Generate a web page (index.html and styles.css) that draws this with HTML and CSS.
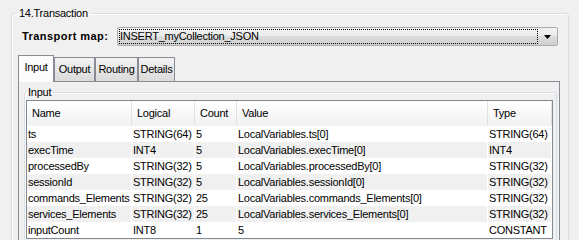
FILE: index.html
```html
<!DOCTYPE html>
<html>
<head>
<meta charset="utf-8">
<title>Transaction</title>
<link rel="stylesheet" href="styles.css">
</head>
<body>
<fieldset class="group">
  <legend>14.Transaction</legend>

  <div class="map-row">
    <label class="map-label">Transport map:</label>
    <div class="combo">
      <div class="combo-text">INSERT_myCollection_JSON</div>
      <div class="combo-btn">
        <svg width="7" height="4" viewBox="0 0 7 4"><polygon points="0,0 7,0 3.5,4" fill="#000"></polygon></svg>
      </div>
    </div>
  </div>

  <div class="tabs">
    <div class="tab tab-input selected">Input</div>
    <div class="tab tab-output">Output</div>
    <div class="tab tab-routing">Routing</div>
    <div class="tab tab-details">Details</div>
  </div>

  <div class="pane">
    <fieldset class="inner">
      <legend>Input</legend>
      <div class="table">
        <div class="row head">
          <div>Name</div><div>Logical</div><div>Count</div><div>Value</div><div>Type</div>
        </div>
        <div class="tbody">
          <div class="row"><div>ts</div><div>STRING(64)</div><div>5</div><div>LocalVariables.ts[0]</div><div>STRING(64)</div></div>
          <div class="row"><div>execTime</div><div>INT4</div><div>5</div><div>LocalVariables.execTime[0]</div><div>INT4</div></div>
          <div class="row"><div>processedBy</div><div>STRING(32)</div><div>5</div><div>LocalVariables.processedBy[0]</div><div>STRING(32)</div></div>
          <div class="row"><div>sessionId</div><div>STRING(32)</div><div>5</div><div>LocalVariables.sessionId[0]</div><div>STRING(32)</div></div>
          <div class="row"><div>commands_Elements</div><div>STRING(32)</div><div>25</div><div>LocalVariables.commands_Elements[0]</div><div>STRING(32)</div></div>
          <div class="row"><div>services_Elements</div><div>STRING(32)</div><div>25</div><div>LocalVariables.services_Elements[0]</div><div>STRING(32)</div></div>
          <div class="row"><div>inputCount</div><div>INT8</div><div>1</div><div>5</div><div>CONSTANT</div></div>
        </div>
      </div>
    </fieldset>
  </div>
</fieldset>
</body>
</html>
```

FILE: styles.css
```css
*{
  box-sizing:border-box;
}
html{
  overflow:hidden;
}
body{
  margin:0;
  padding-top:7px;
  height:240px;
  overflow:hidden;
  background:#f0f0f0;
  color:#000;
  font-family:"Liberation Sans",Arial,sans-serif;
  font-size:11px;
  line-height:13px;
  letter-spacing:-0.25px;
}
fieldset{
  min-width:0;
  border:1px solid #d5dfe5;
  border-radius:3px;
  box-shadow:inset 1px 1px 0 #fff;
}
legend{
  padding:0 2px;
  line-height:13px;
}
.group{
  margin:0 10px 0 11px;
  padding:0;
}
.group>legend{
  margin-left:5px;
}

/* transport map row */
.map-row{
  display:flex;
  align-items:center;
  margin:7px 10px 0 10px;
  height:19px;
}
.map-label{
  width:95px;
  font-weight:bold;
  letter-spacing:0.45px;
}
.combo{
  flex:1;
  display:flex;
  height:19px;
  padding:1px;
  border:1px solid #acacac;
  border-radius:2px;
  background:linear-gradient(#f2f2f2 0%,#ebebeb 50%,#dddddd 50%,#cfcfcf 100%);
}
.combo-text{
  flex:1;
  border:1px dotted #000;
  line-height:13px;
}
.combo-btn{
  width:18px;
  display:flex;
  align-items:center;
  justify-content:center;
}
.combo-btn svg{
  display:block;
}

/* tabs */
.tabs{
  display:flex;
  align-items:flex-end;
  height:26px;
  margin:9px 0 0 6px;
}
.tab{
  height:24px;
  padding-top:5px;
  border:1px solid #898c95;
  border-bottom:0;
  background:linear-gradient(#f2f2f2,#dadada);
  text-align:center;
}
.tab-input{ width:36px; }
.tab-output{ width:41px; }
.tab-routing{ width:43px; }
.tab-details{ width:37px; }
.tab.selected{
  height:27px;
  margin-bottom:-1px;
  background:#fcfcfc;
  position:relative;
  z-index:1;
}
.pane{
  margin:0 8px 0 6px;
  height:200px;
  padding:4px 2px 0 5px;
  border:1px solid #898c95;
}
.inner{
  margin:0;
  padding:0 3px 0 1px;
  height:190px;
}

/* table */
.table{
  margin-top:1px;
  border:1px solid #828790;
  background:#fff;
}
.row{
  display:grid;
  grid-template-columns:105px 63px 42px 251px 64px;
  height:16px;
  line-height:16px;
}
.row>div{
  padding-left:1px;
  border-right:1px solid #fff;
  white-space:nowrap;
  overflow:hidden;
}
.head{
  height:25px;
  line-height:24px;
  background:linear-gradient(#ffffff,#f1f2f4);
  border-bottom:1px solid #f4f4f4;
}
.head>div{
  padding-left:5px;
  border-right:1px solid #dfe2e6;
}
.tbody .row:nth-child(even){
  background:#f0f0f0;
}
```
